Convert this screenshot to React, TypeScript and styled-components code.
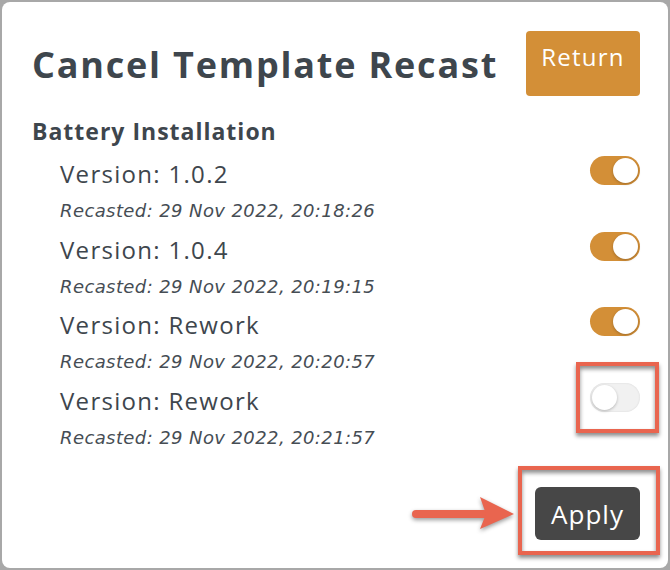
import React, { useState } from "react";
import styled, { createGlobalStyle } from "styled-components";

const GlobalStyle = createGlobalStyle`
  html, body {
    margin: 0;
    padding: 0;
    background: #a8a8a8;
  }
  body {
    font-family: "Open Sans", Lato, sans-serif;
  }
`;

const Modal = styled.div`
  position: relative;
  box-sizing: border-box;
  margin: 2px 0 0 2px;
  width: 666px;
  height: 566px;
  background: #ffffff;
  border-radius: 8px;
  padding: 29px 28px 0 30px;
  color: #3e464d;
`;

const Header = styled.div`
  display: flex;
  justify-content: space-between;
  align-items: flex-start;
`;

const Title = styled.h1`
  margin: 14px 0 0;
  font-size: 36px;
  line-height: 40px;
  font-weight: 700;
  letter-spacing: 1.8px;
`;

const Button = styled.button<{ $dark?: boolean }>`
  border: none;
  cursor: pointer;
  font-family: "Open Sans", Lato, sans-serif;
  color: #ffffff;
  background: ${(p) => (p.$dark ? "#474747" : "#d38f37")};
  border-radius: ${(p) => (p.$dark ? "6px" : "4px")};
`;

const ReturnButton = styled(Button)`
  width: 114px;
  height: 65px;
  padding: 12px 0 0;
  font-size: 24px;
  line-height: 28px;
  letter-spacing: 1.2px;
  align-self: flex-start;
  display: flex;
  justify-content: center;
  align-items: flex-start;
`;

const Section = styled.h2`
  margin: 20px 0 0;
  font-size: 23px;
  line-height: 30px;
  font-weight: 700;
  letter-spacing: 1px;
`;

const List = styled.div`
  display: flex;
  flex-direction: column;
  padding-left: 28px;
  margin-top: 8px;
`;

const Row = styled.div`
  display: grid;
  grid-template-columns: 1fr auto;
  height: 75.5px;
`;

const Name = styled.div`
  font-size: 24px;
  line-height: 40px;
  letter-spacing: 1.3px;
`;

const Stamp = styled.div`
  margin-top: 4px;
  font-family: "DejaVu Sans", "Open Sans", sans-serif;
  font-size: 18px;
  line-height: 26px;
  font-style: italic;
  letter-spacing: 0.4px;
  color: #464d54;
`;

const Toggle = styled.button<{ $on: boolean }>`
  position: relative;
  box-sizing: border-box;
  width: 50px;
  height: 29px;
  margin-top: 2px;
  padding: 0;
  border: none;
  border-radius: 15px;
  cursor: pointer;
  background: ${(p) => (p.$on ? "#d38f37" : "#f1f1f1")};
  box-shadow: ${(p) => (p.$on ? "none" : "inset 0 0 2px rgba(0,0,0,0.12)")};

  &::after {
    content: "";
    position: absolute;
    top: 2px;
    left: ${(p) => (p.$on ? "23px" : "2px")};
    width: 25px;
    height: 25px;
    border-radius: 50%;
    background: #ffffff;
    box-shadow: 0 1px 3px rgba(0, 0, 0, 0.25);
  }
`;

const Footer = styled.div`
  display: flex;
  justify-content: flex-end;
  margin-top: 31px;
`;

const ApplyButton = styled(Button)`
  width: 105px;
  height: 53px;
  font-size: 26px;
  letter-spacing: 1px;
  padding: 0;
`;

const Highlight = styled.div<{ $x: number; $y: number; $w: number; $h: number }>`
  position: absolute;
  box-sizing: border-box;
  left: ${(p) => p.$x}px;
  top: ${(p) => p.$y}px;
  width: ${(p) => p.$w}px;
  height: ${(p) => p.$h}px;
  border: 4px solid #e9654f;
  box-shadow: 0 3px 4px rgba(0, 0, 0, 0.45), inset 0 3px 4px rgba(0, 0, 0, 0.45);
  pointer-events: none;
`;

const Arrow = styled.svg`
  position: absolute;
  left: 410px;
  top: 493px;
  overflow: visible;
  filter: drop-shadow(0 2px 2px rgba(0, 0, 0, 0.4));
  pointer-events: none;
`;

const versions = [
  { name: "Version: 1.0.2", at: "29 Nov 2022, 20:18:26", on: true },
  { name: "Version: 1.0.4", at: "29 Nov 2022, 20:19:15", on: true },
  { name: "Version: Rework", at: "29 Nov 2022, 20:20:57", on: true },
  { name: "Version: Rework", at: "29 Nov 2022, 20:21:57", on: false },
];

export default function App() {
  const [states, setStates] = useState(versions.map((v) => v.on));

  return (
    <>
      <GlobalStyle />
      <Modal>
        <Header>
          <Title>Cancel Template Recast</Title>
          <ReturnButton>Return</ReturnButton>
        </Header>
        <Section>Battery Installation</Section>
        <List>
          {versions.map((v, i) => (
            <Row key={i}>
              <div>
                <Name>{v.name}</Name>
                <Stamp>Recasted: {v.at}</Stamp>
              </div>
              <Toggle
                $on={states[i]}
                onClick={() =>
                  setStates((s) => s.map((x, j) => (j === i ? !x : x)))
                }
              />
            </Row>
          ))}
        </List>
        <Footer>
          <ApplyButton $dark>Apply</ApplyButton>
        </Footer>

        <Highlight $x={574} $y={360} $w={83} $h={71} />
        <Highlight $x={516} $y={464} $w={142} $h={89} />
        <Arrow width="102" height="34" viewBox="0 0 102 34">
          <path d="M4 19 L72 19" stroke="#e9654f" strokeWidth="8" strokeLinecap="round" />
          <path d="M68 2 L102 19 L68 34 L74 19 Z" fill="#e9654f" />
        </Arrow>
      </Modal>
    </>
  );
}
